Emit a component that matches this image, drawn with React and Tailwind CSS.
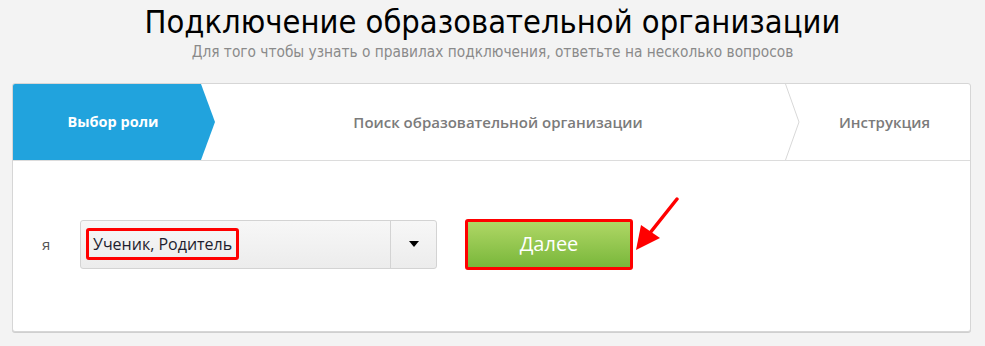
import React from 'react';

const steps = [
  { id: 1, title: "Выбор роли" },
  { id: 2, title: "Поиск образовательной организации" },
  { id: 3, title: "Инструкция" },
];

const App = () => {
  return (
    <div className="min-h-screen w-[985px] bg-[#f3f3f3] font-['Open_Sans',sans-serif]">
      {/* Header */}
      <div className="flex flex-col items-center pt-[3px]">
        <h1 className="font-['DejaVu_Sans_Condensed',sans-serif] text-[32.4px] leading-[39px] text-black">
          Подключение образовательной организации
        </h1>
        <p className="font-['DejaVu_Sans_Condensed',sans-serif] text-[15.3px] leading-[18px] text-[#8a8a8a] mt-[1px]">
          Для того чтобы узнать о правилах подключения, ответьте на несколько вопросов
        </p>
      </div>

      {/* Card */}
      <div className="mx-[12px] mt-[22px] w-[959px] bg-white border border-[#d6d6d6] rounded-[3px] shadow-[0_1px_0_#cfcfcf]">
        {/* Steps */}
        <div className="flex h-[77px] border-b border-[#dcdcdc]">
          <div className="relative w-[188px] bg-[#21a3dd] flex items-center justify-center pl-[12px] rounded-tl-[2px]">
            <span className="text-white font-bold text-[14.5px] z-10">{steps[0].title}</span>
            <div className="absolute top-0 right-[-14px] h-full w-[14px] bg-[#21a3dd] [clip-path:polygon(0_0,100%_50%,0_100%)]" />
          </div>
          <div className="flex-1 flex items-center justify-center pr-[4px]">
            <span className="text-[#7b7b7b] font-semibold text-[15px]">{steps[1].title}</span>
          </div>
          <div className="relative w-[171px] flex items-center justify-center">
            <svg className="absolute left-[-14px] top-0" width="15" height="76" viewBox="0 0 15 76">
              <polyline points="0.5,0 14,38 0.5,76" fill="none" stroke="#d8d8d8" strokeWidth="1" />
            </svg>
            <span className="text-[#7b7b7b] font-semibold text-[15px]">{steps[2].title}</span>
          </div>
        </div>

        {/* Form */}
        <div className="flex items-center h-[170px] pb-[4px]">
          <span className="w-[67px] pl-[29px] text-[15px] text-[#555]">я</span>
          <div className="flex w-[357px] h-[49px] rounded-[3px] border border-[#d3d3d3] bg-gradient-to-b from-[#f7f7f7] to-[#ececec]">
            <div className="flex-1 flex items-center pl-[5px]">
              <span className="border-[3px] border-[#ff0000] rounded-[3px] px-[4px] h-[32px] flex items-center text-[16px] text-[#1e1e2e]">
                Ученик, Родитель
              </span>
            </div>
            <div className="w-[46px] border-l border-[#d3d3d3] flex items-center justify-center">
              <div className="w-0 h-0 border-l-[5px] border-r-[5px] border-t-[6px] border-l-transparent border-r-transparent border-t-black" />
            </div>
          </div>
          <div className="relative ml-[28px]">
            <button className="w-[168px] h-[51px] border-[3px] border-[#ff0000] rounded-[3px] bg-gradient-to-b from-[#afd765] to-[#79b73a] text-white text-[20px] flex items-center justify-center">
              Далее
            </button>
            <svg className="absolute left-[168px] top-[-22px]" width="50" height="56" viewBox="0 0 50 56">
              <line x1="44" y1="2" x2="9" y2="46" stroke="#ff0000" strokeWidth="3.5" strokeLinecap="round" />
              <polygon points="3,53 8,28 27,41" fill="#ff0000" />
            </svg>
          </div>
        </div>
      </div>
    </div>
  );
};

export default App;
